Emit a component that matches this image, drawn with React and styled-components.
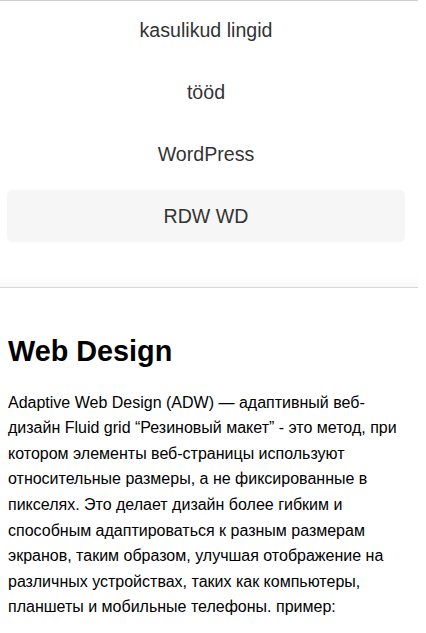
import React from "react";
import styled, { createGlobalStyle } from "styled-components";

const Global = createGlobalStyle`
  html, body { margin: 0; padding: 0; background: #fff; }
  body { font-family: "Liberation Sans", Arial, sans-serif; }
`;

const Header = styled.header`
  width: 418px;
  border-top: 1px solid #cfcfcf;
  border-bottom: 1px solid #d6d6d6;
  box-shadow: inset 0 -16px 14px -13px rgba(0, 0, 0, 0.04);
  padding: 3px 0 45px;
`;

const Nav = styled.nav`
  width: 412px;
  display: flex;
  flex-direction: column;
  gap: 10px;
`;

const NavItem = styled.a`
  display: flex;
  align-items: center;
  justify-content: center;
  height: 52px;
  margin: 0 7px;
  border-radius: 5px;
  font-size: 19.6px;
  color: #333;
  text-decoration: none;
  background: ${(p) => (p.$active ? "#f6f6f6" : "transparent")};
`;

const Main = styled.main`
  padding: 0 8px;
  width: 402px;
`;

const Title = styled.h1`
  margin: 46px 0 21px;
  font-size: 28.8px;
  font-weight: bold;
  color: #000;
  line-height: 1.2;
`;

const Text = styled.p`
  margin: 0;
  font-size: 16px;
  line-height: 1.6;
  color: #000;
`;

const items = ["kasulikud lingid", "tööd", "WordPress", "RDW WD"];

export default function App() {
  return (
    <>
      <Global />
      <Header>
        <Nav>
          {items.map((t, i) => (
            <NavItem key={t} href="#" $active={i === 3}>
              {t}
            </NavItem>
          ))}
        </Nav>
      </Header>
      <Main>
        <Title>Web Design</Title>
        <Text>
          Adaptive Web Design (ADW) — адаптивный веб-дизайн Fluid grid
          “Резиновый макет” - это метод, при котором элементы веб-страницы
          используют относительные размеры, а не фиксированные в пикселях. Это
          делает дизайн более гибким и способным адаптироваться к разным
          размерам экранов, таким образом, улучшая отображение на различных
          устройствах, таких как компьютеры, планшеты и мобильные телефоны.
          пример:
        </Text>
      </Main>
    </>
  );
}
